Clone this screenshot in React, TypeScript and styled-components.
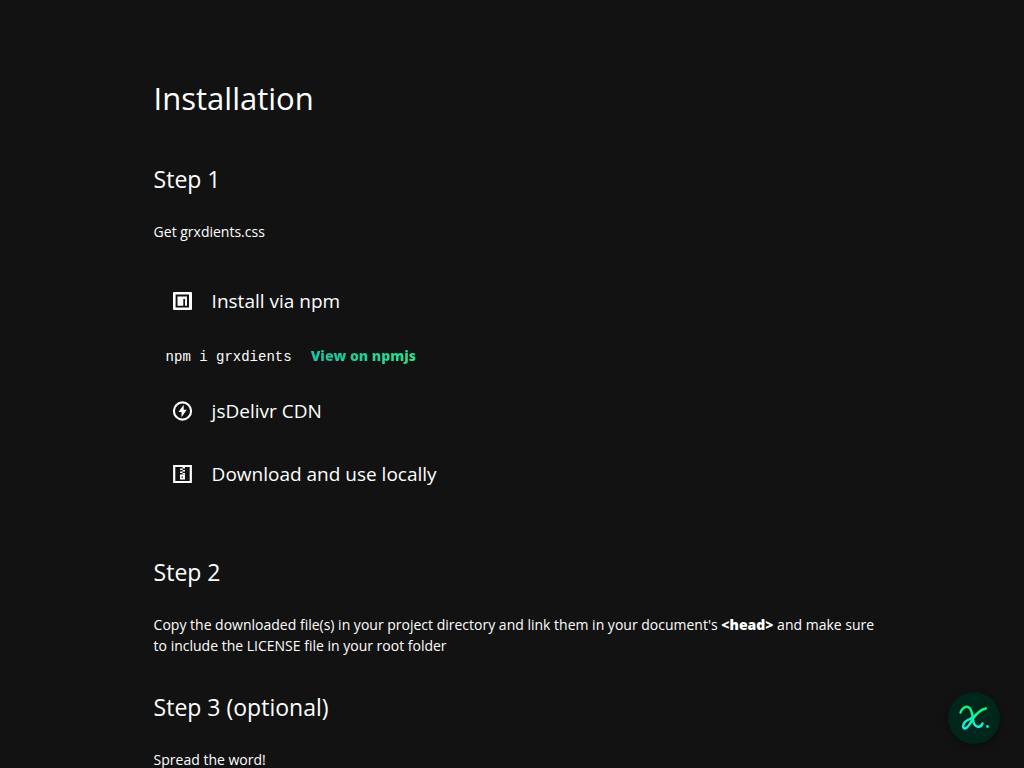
import React from "react";
import styled, { createGlobalStyle } from "styled-components";

const GlobalStyle = createGlobalStyle`
  * { box-sizing: border-box; }
  html { overflow-x: hidden; scrollbar-width: none; }
  body {
    margin: 0;
    background: #121212;
    color: #fff;
    font-family: "Segoe UI", "Open Sans", "Noto Sans", sans-serif;
    font-size: 14px;
    line-height: 21px;
  }
`;

const Page = styled.main`
  padding: 76px 14% 0 15%;
`;

const Title = styled.h1`
  margin: 0 0 7px;
  font-size: 31px;
  line-height: 45px;
  font-weight: 400;
`;

const Step = styled.section`
  padding-top: 35px;
`;

const StepTitle = styled.h2`
  margin: 0 0 26px;
  font-size: 23px;
  line-height: 32px;
  font-weight: 400;
`;

const Text = styled.p`
  margin: 0;

  strong { font-weight: 800; }
`;

const Methods = styled.div`
  display: flex;
  flex-direction: column;
  align-items: flex-start;
  padding: 38px 12px 25px;
`;

const MethodButton = styled.button`
  display: flex;
  align-items: center;
  gap: 18px;
  height: 43px;
  padding: 0 6px 0 5px;
  border: 0;
  background: none;
  color: inherit;
  font: inherit;
  font-size: 19px;
  cursor: pointer;

  & + & { margin-top: 20px; }
`;

const MethodIcon = styled.svg`
  flex: none;
  width: 23px;
  height: 23px;
`;

const MethodDetail = styled.div`
  display: flex;
  align-items: baseline;
  gap: 19px;
  height: 67px;
  padding-top: 22px;
`;

const Code = styled.code`
  font-family: "Courier New", "Liberation Mono", monospace;
  font-size: 14px;
`;

const GradientLink = styled.a`
  background: linear-gradient(90deg, #1fbfa5, #27e08a);
  background-clip: text;
  color: transparent;
  font-weight: 800;
  text-decoration: none;
`;

const Badge = styled.a`
  position: fixed;
  right: 24px;
  bottom: 24px;
  width: 52px;
  height: 52px;
  border-radius: 50%;
  background: #00261c;
  box-shadow: 0 2px 8px rgba(0, 0, 0, 0.4);
`;

const NpmIcon = () => (
  <MethodIcon viewBox="0 0 23 23" aria-hidden="true">
    <path
      fill="#fff"
      fillRule="evenodd"
      d="M3 2h17a1 1 0 0 1 1 1v16a1 1 0 0 1-1 1H3a1 1 0 0 1-1-1V3a1 1 0 0 1 1-1ZM4.600 4.600v12.800h13.400v-12.800ZM6.500 6.500h9.500v9.300h-2V9h-1.700v6.800H6.500Z"
    />
  </MethodIcon>
);

const BoltIcon = () => (
  <MethodIcon viewBox="0 0 23 23" aria-hidden="true">
    <circle cx="11.500" cy="11" r="8.600" fill="none" stroke="#fff" strokeWidth="2.100" />
    <path fill="#fff" d="M12.700 4.800v5h3l-5.200 7.400v-5.200H7.400Z" />
  </MethodIcon>
);

const ZipIcon = () => (
  <MethodIcon viewBox="0 0 23 23" aria-hidden="true">
    <path fill="none" stroke="#fff" strokeWidth="2.200" d="M3.200 3h16.600v16H3.200Z" />
    <path fill="#fff" d="M11.500 4H14v1.500h-2.500ZM9 5.500h2.500V7H9ZM11.500 7H14v1.500h-2.500ZM9 8.500h2.500V10H9ZM11.500 10H14v1.500h-2.500Z" />
    <path fill="#fff" fillRule="evenodd" d="M9 11.500h5v5H9ZM10.500 13.500v1.300H12v-1.300Z" />
  </MethodIcon>
);

const Logo = () => (
  <svg viewBox="0 0 52 52" width="52" height="52" aria-hidden="true">
    <defs>
      <linearGradient id="mark" x1="0" y1="14" x2="0" y2="38" gradientUnits="userSpaceOnUse">
        <stop offset="0" stopColor="#0cf56f" />
        <stop offset="1" stopColor="#12f3e8" />
      </linearGradient>
    </defs>
    <g fill="none" stroke="url(#mark)" strokeWidth="2.400" strokeLinecap="round" strokeLinejoin="round">
      <path d="M12.500 20.500C13.500 16.500 18 13.500 21 15.500C25 18.500 24 25 25.500 30C27 36 33 36 34.500 31.500" />
      <path d="M38 16.500C32 17.500 28.500 21.500 25 26.500C22.500 30.500 20 36.500 17 36.500C14.500 36.500 14.500 32 17.500 29.500C21 27 25 26 28.500 22" />
    </g>
    <circle cx="39.500" cy="34.500" r="1.400" fill="#12e8c0" />
  </svg>
);

export default function App() {
  return (
    <>
      <GlobalStyle />
      <Page>
        <Title>Installation</Title>
        <Step>
          <StepTitle>Step 1</StepTitle>
          <Text>Get grxdients.css</Text>
          <Methods>
            <MethodButton type="button"><NpmIcon />Install via npm</MethodButton>
            <MethodDetail>
              <Code>npm i grxdients</Code>
              <GradientLink href="#npmjs">View on npmjs</GradientLink>
            </MethodDetail>
            <MethodButton type="button"><BoltIcon />jsDelivr CDN</MethodButton>
            <MethodButton type="button"><ZipIcon />Download and use locally</MethodButton>
          </Methods>
        </Step>
        <Step>
          <StepTitle>Step 2</StepTitle>
          <Text>
            Copy the downloaded file(s) in your project directory and link them in your document's{" "}
            <strong>&lt;head&gt;</strong> and make sure to include the LICENSE file in your root folder
          </Text>
        </Step>
        <Step>
          <StepTitle>Step 3 (optional)</StepTitle>
          <Text>Spread the word!</Text>
        </Step>
      </Page>
      <Badge href="#home" aria-label="Home"><Logo /></Badge>
    </>
  );
}
